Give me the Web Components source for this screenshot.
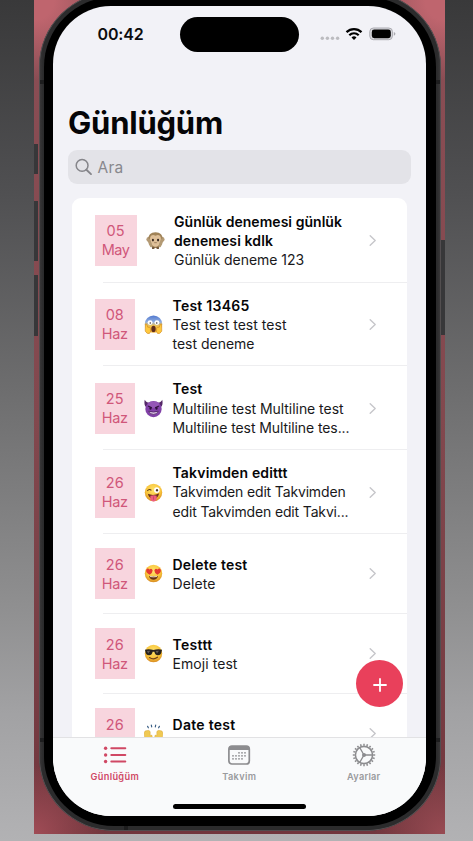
<!DOCTYPE html>
<html lang="tr">
<head>
<meta charset="utf-8">
<title>Günlüğüm</title>
<style>
html,body{margin:0;height:100%;overflow:hidden}
body{font-family:Inter,"Liberation Sans",sans-serif;color:#0c0c0e}
</style>
</head>
<body>
<phone-stage>
  <phone-frame>
    <status-bar></status-bar>
    <page-title><text-line width="154">Günlüğüm</text-line></page-title>
    <search-field><text-line width="25">Ara</text-line></search-field>
    <journal-list>
      <journal-row day="05" month="May" mood="monkey" h="84.5" wide>
        <text-line slot="title" width="167">Günlük denemesi günlük</text-line>
        <text-line slot="title" width="98">denemesi kdlk</text-line>
        <text-line width="129">Günlük deneme 123</text-line>
      </journal-row>
      <journal-row day="08" month="Haz" mood="scream" h="83.7">
        <text-line slot="title" width="76">Test 13465</text-line>
        <text-line width="113">Test test test test</text-line>
        <text-line width="81">test deneme</text-line>
      </journal-row>
      <journal-row day="25" month="Haz" mood="devil" h="83.9">
        <text-line slot="title" width="29">Test</text-line>
        <text-line width="170">Multiline test Multiline test</text-line>
        <text-line width="176">Multiline test Multiline tes...</text-line>
      </journal-row>
      <journal-row day="26" month="Haz" mood="wink" h="83.9">
        <text-line slot="title" width="114">Takvimden edittt</text-line>
        <text-line width="172">Takvimden edit Takvimden</text-line>
        <text-line width="175">edit Takvimden edit Takvi...</text-line>
      </journal-row>
      <journal-row day="26" month="Haz" mood="love" h="80">
        <text-line slot="title" width="74">Delete test</text-line>
        <text-line width="42">Delete</text-line>
      </journal-row>
      <journal-row day="26" month="Haz" mood="cool" h="79.8">
        <text-line slot="title" width="39">Testtt</text-line>
        <text-line width="64">Emoji test</text-line>
      </journal-row>
      <journal-row day="26" month="" mood="hands" h="80" partial>
        <text-line slot="title" width="62">Date test</text-line>
      </journal-row>
    </journal-list>
    <add-button></add-button>
    <tab-bar></tab-bar>
  </phone-frame>
</phone-stage>

<script>
const define = (name, html, setup) => customElements.define(name, class extends HTMLElement {
  connectedCallback() {
    if (this.shadowRoot) return;
    const root = this.attachShadow({mode: 'open'});
    root.innerHTML = typeof html === 'function' ? html(this) : html;
    if (setup) setup(this, root);
  }
});

/* One line of text, tracked so that it takes the given width. */
define('text-line', `<style>:host{display:block;white-space:nowrap}span{display:inline-block}</style><span><slot></slot></span>`, (el, root) => {
  const fit = () => {
    const s = root.querySelector('span'), w = +el.getAttribute('width');
    if (!w) return;
    s.style.letterSpacing = '0';
    const n = el.textContent.length, natural = s.getBoundingClientRect().width;
    if (n && natural) s.style.letterSpacing = ((w + 1 - natural) / n).toFixed(3) + 'px';
  };
  requestAnimationFrame(fit);
});

define('phone-stage', `<style>
:host{display:flex;justify-content:center;width:473px;height:841px;overflow:hidden;background:linear-gradient(#39393a,#505052 23%,#6d6d6e 46%,#8f8f90 72%,#a2a2a4 85%,#b2b2b4)}
.wall{position:relative;width:410.5px;height:834px;margin-left:6px;overflow:hidden;display:flex;justify-content:center;
background:radial-gradient(circle at 0 0,#bf656e 0 20px,transparent 80px),radial-gradient(circle at 100% 0,#bf656e 0 20px,transparent 80px),radial-gradient(circle at 0 100%,#a04c56 0,transparent 70px),radial-gradient(circle at 100% 100%,#984b53 0,transparent 70px),linear-gradient(#8b4e55,#82484e 50%,#71363d)}
i{position:absolute;width:4px;background:#373739}
</style><div class="wall"><i style="left:0;top:144px;height:30px"></i><i style="left:0;top:201px;height:60px"></i><i style="left:0;top:275px;height:61px"></i><i style="right:0;top:240px;height:95px"></i><slot></slot></div>`);

define('phone-frame', `<style>
:host{position:relative;display:block;box-sizing:border-box;flex:none;width:402px;height:839px;margin-top:-8px;padding:5px 5px 5px;border-radius:75px;background:linear-gradient(90deg,#3c3a3b,#2b2b2c 4px,#2b2b2c 398px,#3c3a3b);box-shadow:inset 0 0 0 .7px #5d585a}
.bezel{box-sizing:border-box;height:829px;padding:9px 9.5px 9px 9px;border-radius:70px;background:#000}
.screen{position:relative;height:810px;border-radius:58px;overflow:hidden;background:#f2f2f7;display:flex;flex-direction:column}
i{position:absolute;background:#1d1d1e}
</style><i style="left:1px;top:88px;width:4px;height:4px"></i><i style="right:1px;top:88px;width:4px;height:4px"></i><i style="left:1px;top:746px;width:4px;height:4px"></i><i style="right:1px;top:746px;width:4px;height:4px"></i><i style="left:85px;bottom:1px;width:4px;height:4px"></i><div class="bezel"><div class="screen"><slot></slot></div></div>`);

define('status-bar', `<style>
:host{display:grid;grid-template-columns:127px 119px 1fr;height:56px;align-items:center;box-sizing:border-box;flex:none}
.time{padding-left:45px;font-weight:600;font-size:16px;line-height:20px}
.island{height:35px;border-radius:18px;background:#000}
svg{display:block;margin-left:21px}
</style><div class="time"><text-line width="45">00:42</text-line></div><div class="island"></div>
<svg width="78" height="16" viewBox="0 0 78 16"><g fill="#bcbcc0"><circle cx="2.3" cy="12.2" r="1.7"/><circle cx="7.4" cy="12.2" r="1.7"/><circle cx="12.5" cy="12.2" r="1.7"/><circle cx="17.6" cy="12.2" r="1.7"/></g>
<g fill="none" stroke="#000" stroke-width="2.2"><path d="M26.500 6.100a10.700 10.700 0 0 1 15 0"/><path d="M29.300 9.200a6.700 6.700 0 0 1 9.400 0"/></g><path d="M31.500 11.400a3.700 3.700 0 0 1 5 0L34 14z"/>
<rect x="49.8" y="2" width="22.600" height="11.700" rx="3.600" fill="#d9d9de" stroke="#aaaab0"/><rect x="51.800" y="3.600" width="19" height="8.600" rx="2.400"/><path d="M73.800 6v3.700q1.600-.5 1.600-1.850T73.800 6z" fill="#aaaab0"/></svg>`);

define('page-title', `<style>:host{display:block;flex:none;height:88px;box-sizing:border-box;padding:41px 0 0 15.5px;font-weight:700;font-size:31px;line-height:40px;color:#050507}</style><slot></slot>`);

define('search-field', `<style>:host{display:flex;align-items:center;gap:5px;flex:none;height:34px;margin:0 15.5px 0 15px;padding-left:7px;box-sizing:border-box;border-radius:9px;background:#e3e3e8;color:#88888d;font-size:15.5px}svg{display:block}</style>
<svg width="18" height="18" viewBox="0 0 18 18" fill="none" stroke="#85858a" stroke-width="1.5" stroke-linecap="round"><circle cx="7.1" cy="7.4" r="5.9"/><path d="M11.4 11.8l4.6 4.3" stroke-width="1.9"/></svg><slot></slot>`);

define('journal-list', `<style>:host{display:block;flex:1;min-height:0;overflow:hidden;padding:14px 19px 0 19px}.card{background:#fff;border-radius:9px 9px 0 0}</style><div class="card"><slot></slot></div>`);

const face = (id, inner) => `<defs><radialGradient id="${id}" cx=".5" cy=".35" r=".65"><stop stop-color="#ffe36b"/><stop offset=".65" stop-color="#f8c43b"/><stop offset="1" stop-color="#d88b22"/></radialGradient></defs><circle cx="10" cy="10" r="9.2" fill="url(#${id})"/>${inner}`;
const moods = {
  monkey: `<circle cx="3" cy="9" r="2.6" fill="#b59a76"/><circle cx="17" cy="9" r="2.6" fill="#b59a76"/><path d="M10 1.2c5 0 8 3.2 7.6 8.1C17.2 15 14.2 18 10 18S2.800 15 2.400 9.300C2 4.400 5 1.200 10 1.200z" fill="#a08358"/><path d="M10 5c4.700-2.400 6.700 1.800 5.300 6.300C14.300 15 12.500 16.600 10 16.600S5.700 15 4.700 11.300C3.300 6.800 5.300 2.600 10 5z" fill="#dfc099"/><path d="M1.400 8.500q2-2 3.200 1l1.700 4.300q.6 3-1.600 3.400L3 14zM18.600 8.500q-2-2-3.200 1l-1.700 4.300q-.6 3 1.600 3.400L17 14z" fill="#b39a74"/><ellipse cx="7.300" cy="9.600" rx="1.100" ry="1.400" fill="#38281e"/><ellipse cx="12.700" cy="9.600" rx="1.100" ry="1.400" fill="#38281e"/><path d="M8.600 12.300h2.800" stroke="#8f6c4a" stroke-width=".8"/><path d="M6 17.300q1.700-1.500 3.200 0l-.5 1.700H6.500zM10.800 17.300q1.700-1.500 3.200 0l-.5 1.700h-2.200z" fill="#74583b"/>`,
  scream: `<defs><linearGradient id="s" x2="0" y2="1"><stop stop-color="#5078cf"/><stop offset=".38" stop-color="#92aee0"/><stop offset=".6" stop-color="#f2c34d"/><stop offset="1" stop-color="#eba92f"/></linearGradient></defs><circle cx="10" cy="9.600" r="9.200" fill="url(#s)"/><circle cx="6.400" cy="8" r="2.600" fill="#fff"/><circle cx="13.600" cy="8" r="2.600" fill="#fff"/><circle cx="6.600" cy="8.300" r=".8" fill="#3b2a25"/><circle cx="13.400" cy="8.300" r=".8" fill="#3b2a25"/><ellipse cx="10" cy="14.700" rx="2.300" ry="3.300" fill="#5e2c1b"/><path d="M1.400 9.500q1.500-.7 1.800 1.200l.8 2.200q2.200-.6 2.700 1.200.8 4-1 5.400-2.400.8-4.400-2.500zM18.600 9.500q-1.500-.7-1.800 1.200l-.8 2.200q-2.200-.6-2.700 1.200-.8 4 1 5.400 2.400.8 4.400-2.500z" fill="#ffc83d" stroke="#c98322" stroke-width=".6"/>`,
  devil: `<path d="M.8.800Q-.6 7.500 3.500 9.200L7 3.800Q2.600 4.500.8.800zM19.200.800q1.400 6.700-2.700 8.400L13 3.800q4.400.7 6.200-3z" fill="#542767"/><circle cx="10" cy="10.600" r="8.600" fill="#8140a7"/><ellipse cx="10" cy="6" rx="6" ry="3.500" fill="#a165bf" opacity=".6"/><path d="M4.300 7.300l4 2M15.700 7.300l-4 2" stroke="#331340" stroke-width="1.300"/><ellipse cx="6.800" cy="9.900" rx="1.100" ry="1.400" fill="#2e103b"/><ellipse cx="13.200" cy="9.900" rx="1.100" ry="1.400" fill="#2e103b"/><path d="M5 12.800q5 2 10 0-1 3.400-5 3.400t-5-3.400z" fill="#dcc6e6" stroke="#49205d" stroke-width=".8"/>`,
  wink: face('w', `<path d="M3.500 8.200q2.200-2.500 4.300-.4" fill="none" stroke="#633c16" stroke-width="1.200"/><circle cx="13.500" cy="7.500" r="2.900" fill="#fff"/><ellipse cx="13.700" cy="7.600" rx="1.100" ry="1.400" fill="#4a3428"/><path d="M4 11.400q6 2.600 12-.6-1.300 5.700-6 5.700T4 11.400z" fill="#6a2f1b"/><path d="M6.700 13.500q3.300-1 6.600-.2v3.600q-.5 2.700-3.200 2.700T6.700 17z" fill="#ee5d7d"/><path d="M10 14v3.600" stroke="#bd3b5e" stroke-width=".7"/>`),
  love: face('l', `<path d="M5.900 11.200Q1.700 8.900 2.300 6.300 3.400 3.700 5.700 5.700 8.300 4 9.100 6.800q0 2.300-3.200 4.400z" fill="#e33931"/><path d="M14.100 11.200q4.200-2.300 3.600-4.900-1.100-2.600-3.400-.6-2.600-1.700-3.400 1.100 0 2.300 3.200 4.400z" fill="#e33931"/><path d="M5.300 12.500q4.700 1.300 9.400 0-.9 4-4.700 4t-4.700-4z" fill="#653314"/><path d="M6.300 13.200q3.700.8 7.400 0" stroke="#fff" stroke-width=".8" fill="none"/>`),
  cool: face('c', `<path d="M1 6q4.500-1 9 .4Q14.500 5 19 6l-.4 1.700q-.4 4.200-4 4.200-2.900 0-3.700-3.700h-1.800q-.8 3.700-3.700 3.700-3.600 0-4-4.200z" fill="#26211e"/><path d="M3 7.300l3.500-.3-2 3z" fill="#625c58"/><path d="M12.200 7.300l3.500-.3-2 3z" fill="#625c58"/><path d="M5.800 14.200q4.200 2.900 8.400-.3" fill="none" stroke="#73431b" stroke-width="1.200" stroke-linecap="round"/>`),
  hands: `<path d="M3.800 2.500l.8 1.500M7.700 1.200l.4 1.900M12.300 1.200l-.4 1.900M16.200 2.500l-.8 1.500" stroke="#355a82" stroke-width="1.200" stroke-linecap="round"/><path d="M0 9.500Q1 6.500 3 7q2-1 3.500 1v4q2-1 2.200.8Q8 16 5.500 18v3H1.700l-.7-5zM20 9.500Q19 6.500 17 7q-2-1-3.500 1v4q-2-1-2.200.8.700 3.200 3.200 5.200v3h3.800l.7-5z" fill="#f0c953" stroke="#d9a63a" stroke-width=".5"/>`
};

define('journal-row', el => `<style>
:host{display:block}
.row{position:relative;box-sizing:border-box;height:${el.getAttribute('h')}px;display:flex;align-items:center;padding:0 30.5px 0 23px;background:linear-gradient(#eeeef0,#eeeef0) 31px 100%/100% 1px no-repeat}
:host([partial]) .row{background:none}
.date{box-sizing:border-box;flex:none;width:${el.hasAttribute('wide') ? 42 : 40.5}px;height:51px;padding-top:6.500px;background:#f8d5de;color:#d0577a;font-size:14.500px;line-height:19px;display:flex;flex-direction:column;align-items:center}
.mood{flex:none;margin:0 9.500px 0 9px;width:19px;height:19px}
.text{flex:1;min-width:0;font-size:14px;line-height:19.1px;color:#19191b}
:host([partial]) .text{min-height:38.200px}
.title{font-weight:600;color:#060608}
.chev{flex:none}
</style><div class="row"><div class="date"><text-line width="17">${el.getAttribute('day')}</text-line>${el.getAttribute('month') ? `<text-line width="${el.hasAttribute('wide') ? 26.5 : 25}">${el.getAttribute('month')}</text-line>` : ''}</div>
<svg class="mood" viewBox="0 0 20 20">${moods[el.getAttribute('mood')]}</svg>
<div class="text"><div class="title"><slot name="title"></slot></div><slot></slot></div>
<svg class="chev" width="8" height="13" viewBox="0 0 8 13" fill="none" stroke="#c6c6ca" stroke-width="1.400" stroke-linecap="round" stroke-linejoin="round"><path d="M1.200 1.800l5 4.700-5 4.700"/></svg></div>`);

define('add-button', `<style>:host{position:absolute;left:303.5px;top:653.500px;width:47px;height:47px;border-radius:50%;background:#e9405b;display:grid;place-items:center}svg{margin-top:3px}</style><svg width="14" height="14" viewBox="0 0 14 14" stroke="#fff" stroke-width="1.800" stroke-linecap="round"><path d="M7 1v12M1 7h12"/></svg>`);

const teeth = Array.from({length: 20}, (_, i) => `<path d="M12 .8v2" transform="rotate(${i * 18} 12 12)"/>`).join('');
const dots = [[12,9.8],[15,9.8],[18,9.8],[6,12.8],[9,12.8],[12,12.8],[15,12.8],[18,12.8],[6,15.800],[9,15.800],[12,15.800],[15,15.800]].map(([x, y]) => `<circle cx="${x}" cy="${y}" r=".9"/>`).join('');
define('tab-bar', `<style>
:host{display:block;flex:none;height:79px;box-sizing:border-box;border-top:1px solid #e2e2e4;background:#f9fafb;position:relative}
nav{display:grid;grid-template-columns:repeat(3,124.500px);height:46px}
.tab{display:flex;flex-direction:column;align-items:center;padding-top:5px;gap:4px;font-size:9.200px;line-height:12px;font-weight:600;color:#9a9a9d}
.on{color:#d04864}
svg{display:block}
.home{width:133px;height:5px;border-radius:3px;background:#000;margin:20px 0 0 120px}
</style><nav>
<div class="tab on"><svg width="24" height="24" viewBox="0 0 24 24" fill="currentColor"><g stroke="currentColor" stroke-width="2" stroke-linecap="round"><path d="M8.300 5.300h14M8.300 12h14M8.300 18.500h14"/></g><circle cx="2.600" cy="5.300" r="1.700"/><circle cx="2.600" cy="12" r="1.700"/><circle cx="2.600" cy="18.500" r="1.700"/></svg><text-line width="47.500">Günlüğüm</text-line></div>
<div class="tab"><svg width="24" height="24" viewBox="0 0 24 24" fill="#8c8c8f"><rect x="1.900" y="3" width="20.400" height="18" rx="3" fill="none" stroke="#8c8c8f" stroke-width="1.700"/><path d="M2 7V5q0-2 3-2h14.300q3 0 3 2v2z"/>${dots}</svg><text-line width="33">Takvim</text-line></div>
<div class="tab"><svg width="24" height="24" viewBox="0 0 24 24" fill="none" stroke="#8c8c8f"><g stroke-width="1.500">${teeth}</g><circle cx="12" cy="12" r="8.600" stroke-width="1.600"/><circle cx="12" cy="12" r="2" fill="#8c8c8f" stroke="none"/><path d="M12 12h8.800M12 12L7.600 4.400M12 12L7.600 19.600" stroke-width="1.300"/></svg><text-line width="32.500">Ayarlar</text-line></div>
</nav><div class="home"></div>`);
</script>
</body>
</html>
